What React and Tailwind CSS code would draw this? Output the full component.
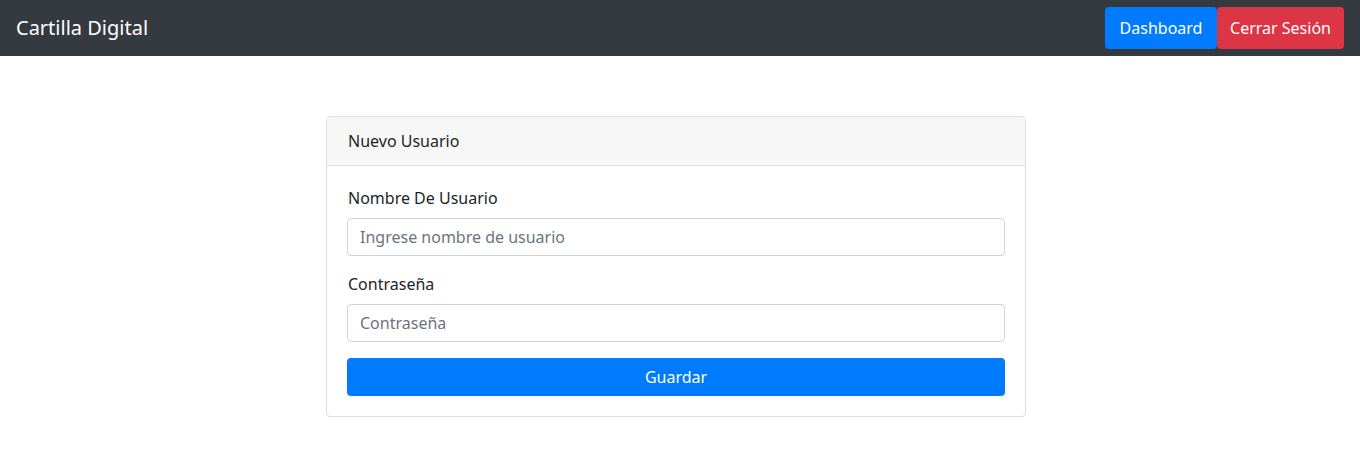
import React, { useState } from 'react';

const App = () => {
  const [usuario, setUsuario] = useState('');
  const [clave, setClave] = useState('');

  return (
    <div className="min-h-screen bg-white text-[#212529] font-['Noto_Sans','Open_Sans',sans-serif]">
      {/* Navbar */}
      <nav className="h-[56px] bg-[#343a40] flex items-center justify-between pl-[16px] pr-[16px]">
        <a href="#" className="text-white text-[20px] leading-[30px]">Cartilla Digital</a>
        <div className="flex items-center">
          <button className="w-[112px] h-[42px] bg-[#007bff] text-white text-[16px] rounded-[4px]">
            Dashboard
          </button>
          <button className="w-[127px] h-[42px] bg-[#dc3545] text-white text-[16px] rounded-[4px]">
            Cerrar Sesión
          </button>
        </div>
      </nav>

      {/* Form card */}
      <div className="flex justify-center pr-[8px] pt-[60px]">
        <div className="w-[700px] border border-[#dfdfdf] rounded-[4px]">
          <div className="h-[49px] bg-[#f7f7f7] border-b border-[#dfdfdf] px-[21px] flex items-center text-[16px] rounded-t-[4px]">
            Nuevo Usuario
          </div>
          <form className="px-[20px] py-[20px]" onSubmit={(e) => e.preventDefault()}>
            <div className="mb-[16px]">
              <label className="block text-[16px] leading-[24px] mb-[8px] pl-[1px]">Nombre De Usuario</label>
              <input
                type="text"
                value={usuario}
                onChange={(e) => setUsuario(e.target.value)}
                placeholder="Ingrese nombre de usuario"
                className="block w-full h-[38px] px-[12px] border border-[#ced4da] rounded-[4px] text-[16px] placeholder:text-[#6c757d] outline-none"
              />
            </div>
            <div className="mb-[16px]">
              <label className="block text-[16px] leading-[24px] mb-[8px] pl-[1px]">Contraseña</label>
              <input
                type="password"
                value={clave}
                onChange={(e) => setClave(e.target.value)}
                placeholder="Contraseña"
                className="block w-full h-[38px] px-[12px] border border-[#ced4da] rounded-[4px] text-[16px] placeholder:text-[#6c757d] outline-none"
              />
            </div>
            <button type="submit" className="block w-full h-[38px] bg-[#007bff] text-white text-[16px] rounded-[4px]">
              Guardar
            </button>
          </form>
        </div>
      </div>
    </div>
  );
};

export default App;
